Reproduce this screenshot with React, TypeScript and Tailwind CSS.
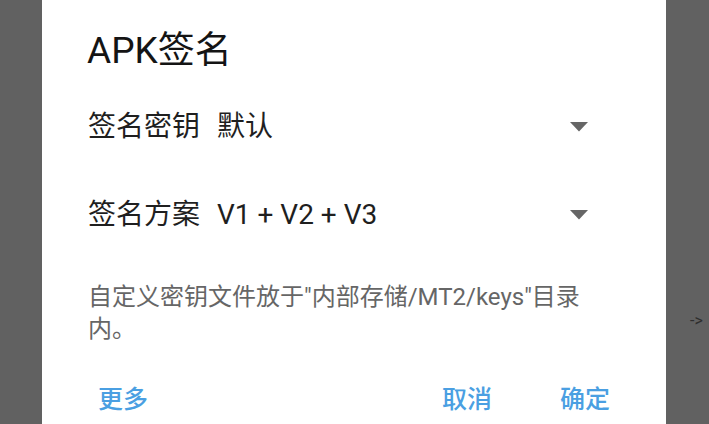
const font = { fontFamily: 'Roboto, "Noto Sans CJK SC", sans-serif' };

const Caret = () => (
  <svg width="18" height="10" viewBox="0 0 18 10" className="shrink-0">
    <path d="M0 0 L18 0 L9 9.5 Z" fill="#666666" />
  </svg>
);

const SpinnerRow = ({ label, value }: { label: string; value: string }) => (
  <div className="flex items-center justify-between h-[56px] pl-[46px] pr-[78px]">
    <div className="flex items-center gap-[17px] text-[28px] text-[#1f1f1f] leading-none">
      <span>{label}</span>
      <span>{value}</span>
    </div>
    <Caret />
  </div>
);

const App = () => {
  return (
    <div className="w-[709px] h-[424px] flex bg-[#616161] overflow-hidden" style={font}>
      <div className="w-[42px] shrink-0" />
      <div className="w-[624px] h-full bg-white flex flex-col shrink-0">
        <h2 className="mt-[26px] h-[48px] flex items-center pl-[45px] text-[37px] text-[#141414] leading-none">
          APK签名
        </h2>

        <div className="mt-[25px]">
          <SpinnerRow label="签名密钥" value="默认" />
        </div>
        <div className="mt-[32px]">
          <SpinnerRow label="签名方案" value="V1 + V2 + V3" />
        </div>

        <p className="mt-[38px] pl-[46px] pr-[40px] text-[24px] leading-[32px] text-[#666666]">
          自定义密钥文件放于"内部存储/MT2/keys"目录
          <br />
          内。
        </p>

        <div className="mt-[31px] h-[48px] flex items-center justify-between px-[46px] text-[25px] font-medium text-[#4a9fe2]">
          <button className="px-[10px] h-full">更多</button>
          <div className="flex items-center gap-[48px] h-full">
            <button className="px-[10px] h-full">取消</button>
            <button className="px-[10px] h-full">确定</button>
          </div>
        </div>
      </div>
      <div className="flex-1 pt-[309px] pl-[24px] text-[16px] text-[#2e2e2e]">
        {"->"}
      </div>
    </div>
  );
};

export default App;
